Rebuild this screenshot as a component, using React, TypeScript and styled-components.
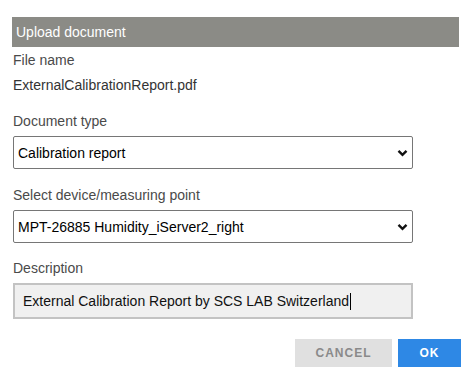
import React from "react";
import styled, { createGlobalStyle } from "styled-components";

const GlobalStyle = createGlobalStyle`
  html, body {
    margin: 0;
    padding: 0;
    background: #ffffff;
    font-family: "Liberation Sans", Arial, sans-serif;
  }
`;

const Chevron = () => (
  <svg width="11" height="8" viewBox="0 0 11 8">
    <path d="M1.5 1.8 L5.5 5.8 L9.5 1.8" fill="none" stroke="#111" strokeWidth="2.4" />
  </svg>
);

interface SelectProps {
  value: string;
}

const FakeSelect = ({ value }: SelectProps) => (
  <SelectBox>
    <SelectText>{value}</SelectText>
    <Chevron />
  </SelectBox>
);

const App = () => {
  return (
    <>
      <GlobalStyle />
      <Dialog>
        <Header>Upload document</Header>
        <Label $top={5}>File name</Label>
        <Value>ExternalCalibrationReport.pdf</Value>
        <Label $top={20}>Document type</Label>
        <FakeSelect value="Calibration report" />
        <Label $top={18}>Select device/measuring point</Label>
        <FakeSelect value="MPT-26885 Humidity_iServer2_right" />
        <Label $top={17}>Description</Label>
        <TextBox>
          External Calibration Report by SCS LAB Switzerland
          <Caret />
        </TextBox>
        <Actions>
          <CancelButton>CANCEL</CancelButton>
          <OkButton>OK</OkButton>
        </Actions>
      </Dialog>
    </>
  );
};

export default App;

const Dialog = styled.div`
  width: 449px;
  padding: 17px 0 0 12px;
  display: flex;
  flex-direction: column;
`;

const Header = styled.div`
  width: 447px;
  height: 30px;
  box-sizing: border-box;
  padding-left: 4px;
  display: flex;
  align-items: center;
  background: #8b8b86;
  color: #ffffff;
  font-size: 14px;
`;

const Label = styled.div<{ $top: number }>`
  margin-top: ${(p) => p.$top}px;
  padding-left: 1px;
  font-size: 14px;
  line-height: 16px;
  color: #4a4a4a;
`;

const Value = styled.div`
  margin-top: 9px;
  padding-left: 1px;
  font-size: 14px;
  line-height: 16px;
  color: #333;
`;

const SelectBox = styled.div`
  margin-top: 7px;
  margin-left: 1px;
  width: 400px;
  height: 33px;
  box-sizing: border-box;
  border: 1px solid #767676;
  border-radius: 2px;
  padding: 0 4px 0 4px;
  display: flex;
  align-items: center;
  justify-content: space-between;
`;

const SelectText = styled.span`
  font-size: 14px;
  color: #000;
`;

const TextBox = styled.div`
  margin-top: 7px;
  margin-left: 1px;
  width: 400px;
  height: 36px;
  box-sizing: border-box;
  border: 2px solid #c3c3c3;
  background: #f0f0f0;
  padding-left: 8px;
  display: flex;
  align-items: center;
  font-size: 14px;
  color: #111;
`;

const Caret = styled.span`
  display: inline-block;
  width: 1px;
  height: 17px;
  background: #000;
  margin-left: 1px;
`;

const Actions = styled.div`
  margin-top: 20px;
  width: 449px;
  display: flex;
  justify-content: flex-end;
  gap: 6px;
`;

const BaseButton = styled.button`
  height: 28px;
  border: none;
  font-family: "Liberation Sans", Arial, sans-serif;
  font-weight: bold;
  font-size: 12px;
  letter-spacing: 1px;
  cursor: pointer;
`;

const CancelButton = styled(BaseButton)`
  width: 97px;
  background: #e0e0e0;
  color: #8a8a8a;
`;

const OkButton = styled(BaseButton)`
  width: 63px;
  background: #2e88e5;
  color: #ffffff;
`;
